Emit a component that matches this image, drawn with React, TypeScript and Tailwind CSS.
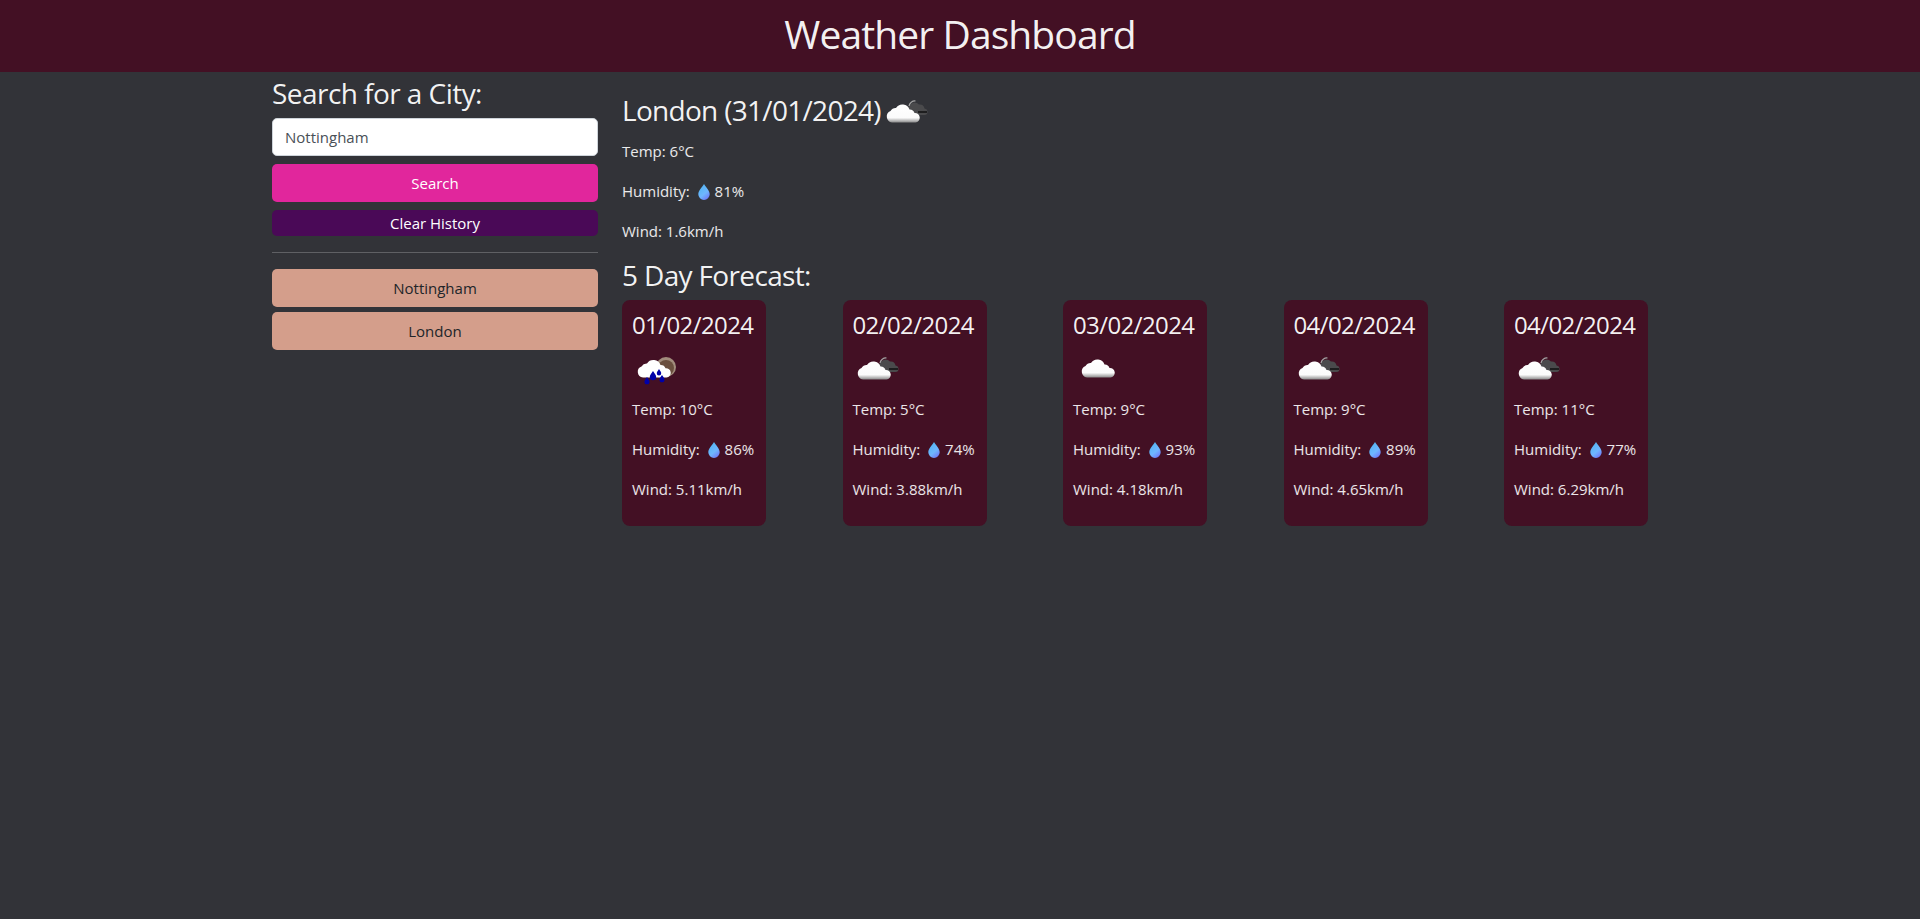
const FONT = "font-['Open_Sans','Noto_Sans',sans-serif]";

// ─── Weather icons ────────────────────────────────────────────────────────────

const CLOUD = "M7 26.500a6 6 0 0 1-1.500-11.500A6 6 0 0 1 11 12a7.500 7.500 0 0 1 13.500 1.500a5 5 0 0 1 5 3.500a4.750 4.750 0 0 1 1 9.500z";
const DROP = "M0 0c-2 3-3.200 4.500-3.200 6a3.200 3.200 0 0 0 6.400 0C3.200 4.500 2 3 0 0z";

function CloudGradient({ id }: { id: string }) {
  return (
    <defs>
      <linearGradient id={id} x1="0" y1="0" x2="0" y2="1">
        <stop offset="0" stopColor="#ffffff" />
        <stop offset="0.74" stopColor="#fbfbfb" />
        <stop offset="1" stopColor="#8a8a8a" />
      </linearGradient>
    </defs>
  );
}

function WeatherIcon({ kind, id }: { kind: "cloudy" | "cloud" | "rain"; id: string }) {
  return (
    <svg width="44" height="32" viewBox="0 0 44 32" aria-hidden="true" className="block">
      <CloudGradient id={id} />
      {kind === "cloud" && (
        <g transform="translate(4 -2)">
          <path d={CLOUD} fill={`url(#${id})`} />
        </g>
      )}
      {kind === "cloudy" && (
        <>
          <path d="M23 13a6.500 6.500 0 0 1 11-4.500a5 5 0 0 1 5.500 4a3.500 3.500 0 0 1 3 3.500a3 3 0 0 1-3 3H27z" fill="#4a4a4c" />
          <path d="M24 10a6 6 0 0 1 6.500-5" fill="none" stroke="#a5a5a5" strokeWidth="1.200" />
          <path d="M33 16h9" stroke="#111111" strokeWidth="1.500" />
          <path d={CLOUD} fill={`url(#${id})`} />
        </>
      )}
      {kind === "rain" && (
        <>
          <circle cx="31" cy="14" r="10" fill="#a18c7c" />
          <circle cx="31" cy="15" r="8" fill="#6a4f3e" />
          <path d={CLOUD} fill="#ffffff" transform="translate(1 -1) scale(1 0.96)" />
          <g fill="#0000a8">
            <path d={DROP} transform="translate(18 18)" />
            <path d={DROP} transform="translate(24 16) scale(0.7)" />
            <path d={DROP} transform="translate(12 24) scale(0.8)" />
            <path d={DROP} transform="translate(27 22) scale(0.8)" />
          </g>
        </>
      )}
    </svg>
  );
}

function Droplet({ id }: { id: string }) {
  return (
    <svg width="12" height="16" viewBox="0.700 0.500 11.600 16.300" aria-hidden="true" className="inline-block align-[-3px] ml-[8px] mr-[1px]">
      <defs>
        <linearGradient id={id} x1="0.200" y1="0" x2="0.800" y2="1">
          <stop offset="0" stopColor="#4fb4f0" />
          <stop offset="0.600" stopColor="#6fb6ff" />
          <stop offset="1" stopColor="#6f74f8" />
        </linearGradient>
      </defs>
      <path d="M6.500 0.500C4 4.500 0.700 7.500 0.700 11a5.800 5.800 0 0 0 11.600 0C12.300 7.500 9 4.500 6.500 0.500z" fill={`url(#${id})`} />
    </svg>
  );
}

// ─── Data ─────────────────────────────────────────────────────────────────────

const forecast = [
  { date: "01/02/2024", icon: "rain", temp: "10", humidity: "86", wind: "5.11" },
  { date: "02/02/2024", icon: "cloudy", temp: "5", humidity: "74", wind: "3.88" },
  { date: "03/02/2024", icon: "cloud", temp: "9", humidity: "93", wind: "4.18" },
  { date: "04/02/2024", icon: "cloudy", temp: "9", humidity: "89", wind: "4.65" },
  { date: "04/02/2024", icon: "cloudy", temp: "11", humidity: "77", wind: "6.29" },
] as const;

// ─── Sidebar ──────────────────────────────────────────────────────────────────

function Sidebar() {
  return (
    <aside className="w-[326px] shrink-0">
      <h3 className="text-[28px] leading-[34px] mt-[4px] tracking-[-0.55px] text-white/95">Search for a City:</h3>
      <div className="mt-[8px] h-[38px] rounded-[5px] bg-white border border-[#ced4da] px-[12px] flex items-center text-[15px] text-[#495057]">
        Nottingham
      </div>
      <button type="button" className="mt-[8px] block w-full h-[38px] rounded-[5px] bg-[#e1269c] text-white text-[15px]">
        Search
      </button>
      <button type="button" className="mt-[8px] block w-full h-[26px] rounded-[5px] bg-[#4a0957] text-white text-[15px]">
        Clear History
      </button>
      <hr className="mt-[16px] border-t border-[#5f6064]" />
      <div className="mt-[16px] flex flex-col gap-[5px]">
        {["Nottingham", "London"].map((city) => (
          <button key={city} type="button" className="block w-full h-[38px] rounded-[5px] bg-[#d49e8b] text-[#212529] text-[15px]">
            {city}
          </button>
        ))}
      </div>
    </aside>
  );
}

// ─── Forecast card ────────────────────────────────────────────────────────────

function ForecastCard({ item, index }: { item: (typeof forecast)[number]; index: number }) {
  return (
    <div className="w-[144px] h-[226px] shrink-0 rounded-[8px] bg-[#431024] pl-[10px] pt-[8px] text-[15px] leading-[22px] text-white/90 whitespace-nowrap">
      <h4 className="text-[24px] leading-[34px] tracking-[-0.6px] text-white/95">{item.date}</h4>
      <div className="h-[32px] mt-[11px] pl-[3px]">
        <WeatherIcon kind={item.icon} id={`cloud-${index}`} />
      </div>
      <p className="mt-[13px]">Temp: {item.temp}°C</p>
      <p className="mt-[18px]">Humidity:<Droplet id={`drop-${index}`} /> {item.humidity}%</p>
      <p className="mt-[18px]">Wind: {item.wind}km/h</p>
    </div>
  );
}

// ─── Page ─────────────────────────────────────────────────────────────────────

export default function App() {
  return (
    <div className={`${FONT} min-h-[919px] bg-[#323338] text-white`}>
      <header className="h-[72px] pb-[4px] bg-[#431024] flex items-center justify-center">
        <h1 className="text-[39px] leading-[48px] tracking-[-0.9px] text-white/95">Weather Dashboard</h1>
      </header>
      <div className="flex gap-[24px] pl-[272px]">
        <Sidebar />
        <main className="w-[1026px]">
          <div className="mt-[18px] flex items-center h-[40px]">
            <h3 className="text-[28px] leading-[34px] tracking-[-0.7px] text-white/95">London (31/01/2024)</h3>
            <span className="ml-[4px] mt-[4px]"><WeatherIcon kind="cloudy" id="cloud-now" /></span>
          </div>
          <div className="text-[15px] leading-[22px] text-white/90">
            <p className="mt-[10px]">Temp: 6°C</p>
            <p className="mt-[18px]">Humidity:<Droplet id="drop-now" /> 81%</p>
            <p className="mt-[18px]">Wind: 1.6km/h</p>
          </div>
          <h3 className="mt-[16px] text-[28px] leading-[34px] tracking-[-0.65px] text-white/95">5 Day Forecast:</h3>
          <div className="mt-[8px] flex gap-[76.5px]">
            {forecast.map((item, i) => (
              <ForecastCard key={i} item={item} index={i} />
            ))}
          </div>
        </main>
      </div>
    </div>
  );
}
